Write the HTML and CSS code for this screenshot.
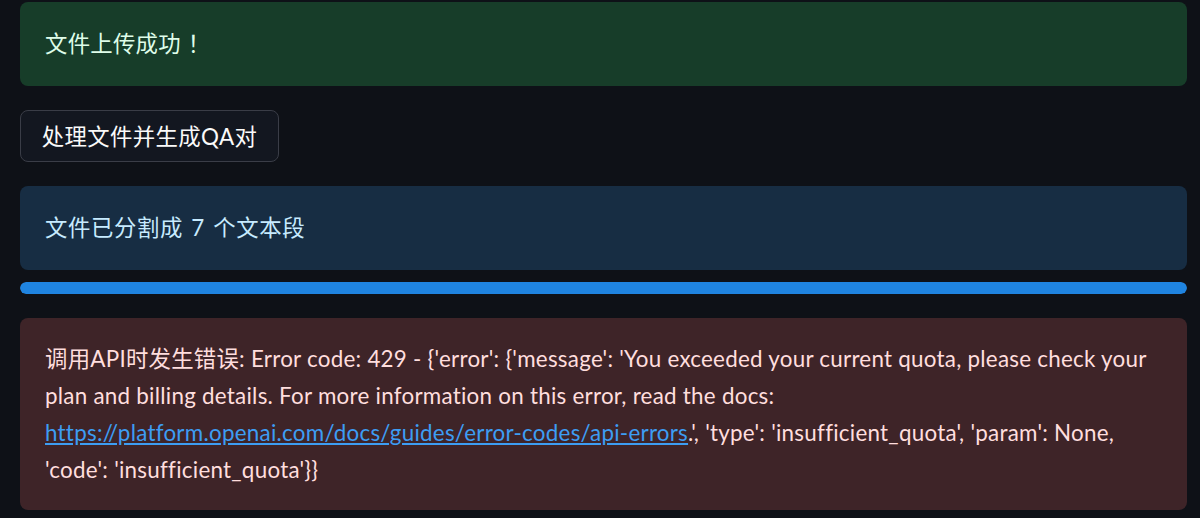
FILE: index.html
```html
<!DOCTYPE html>
<html lang="zh-CN">
<head>
<meta charset="utf-8">
<link rel="stylesheet" href="styles.css">
</head>
<body>
<main class="main">
  <div class="alert alert-success"><p>文件上传成功<span class="fw">！</span></p></div>
  <div class="btn-row"><button class="btn">处理文件并生成QA对</button></div>
  <div class="alert alert-info"><p class="spaced">文件已分割成 7 个文本段</p></div>
  <div class="progress"><div class="progress-fill"></div></div>
  <div class="alert alert-error"><p>调用API时发生错误: Error code: 429 - {'error': {'message': 'You exceeded your current quota, please check your plan and billing details. For more information on this error, read the docs: <a href="#">https://platform.openai.com/docs/guides/error-codes/api-errors</a>.', 'type': 'insufficient_quota', 'param': None, 'code': 'insufficient_quota'}}</p></div>
</main>
</body>
</html>
```
FILE: styles.css
```css
html, body {
  margin: 0;
  padding: 0;
  background: #0e1117;
}
body {
  font-family: "Lato", "Noto Sans CJK SC", sans-serif;
  font-size: 22.4px;
  letter-spacing: 0.25px;
  color: #fafafa;
}
.main {
  padding: 2px 13px 0 20px;
  display: flex;
  flex-direction: column;
}
.alert {
  border-radius: 8px;
  padding: 0 25px 4px;
  display: flex;
  align-items: center;
  box-sizing: border-box;
}
.alert p {
  margin: 0;
}
.alert p.spaced {
  letter-spacing: 0.6px;
  word-spacing: 2px;
}
.fw {
  font-family: "Noto Sans CJK JP", sans-serif;
  margin-left: 7px;
}
.alert-success {
  background: #173d29;
  color: #dffde9;
  height: 84px;
}
.alert-info {
  background: #172d43;
  color: #c7ebff;
  height: 84px;
  margin-top: 24px;
}
.alert-error {
  background: #3e2428;
  color: #ffdede;
  margin-top: 24px;
  padding: 22px 25px 22px;
  line-height: 37px;
}
.alert-error a {
  color: #3d9df3;
  text-decoration: underline;
}
.btn-row {
  margin-top: 24px;
  display: flex;
}
.btn {
  font-family: inherit;
  font-size: 22.4px;
  letter-spacing: 0.35px;
  color: #fafafa;
  background: #131720;
  border: 1px solid #3a3d47;
  border-radius: 8px;
  height: 52px;
  width: 259px;
  padding: 0 0 3px;
}
.progress {
  margin-top: 12px;
  height: 12px;
  border-radius: 6px;
  background: #262730;
  overflow: hidden;
}
.progress-fill {
  width: 100%;
  height: 100%;
  background: #1f84e0;
  border-radius: 6px;
}
```
